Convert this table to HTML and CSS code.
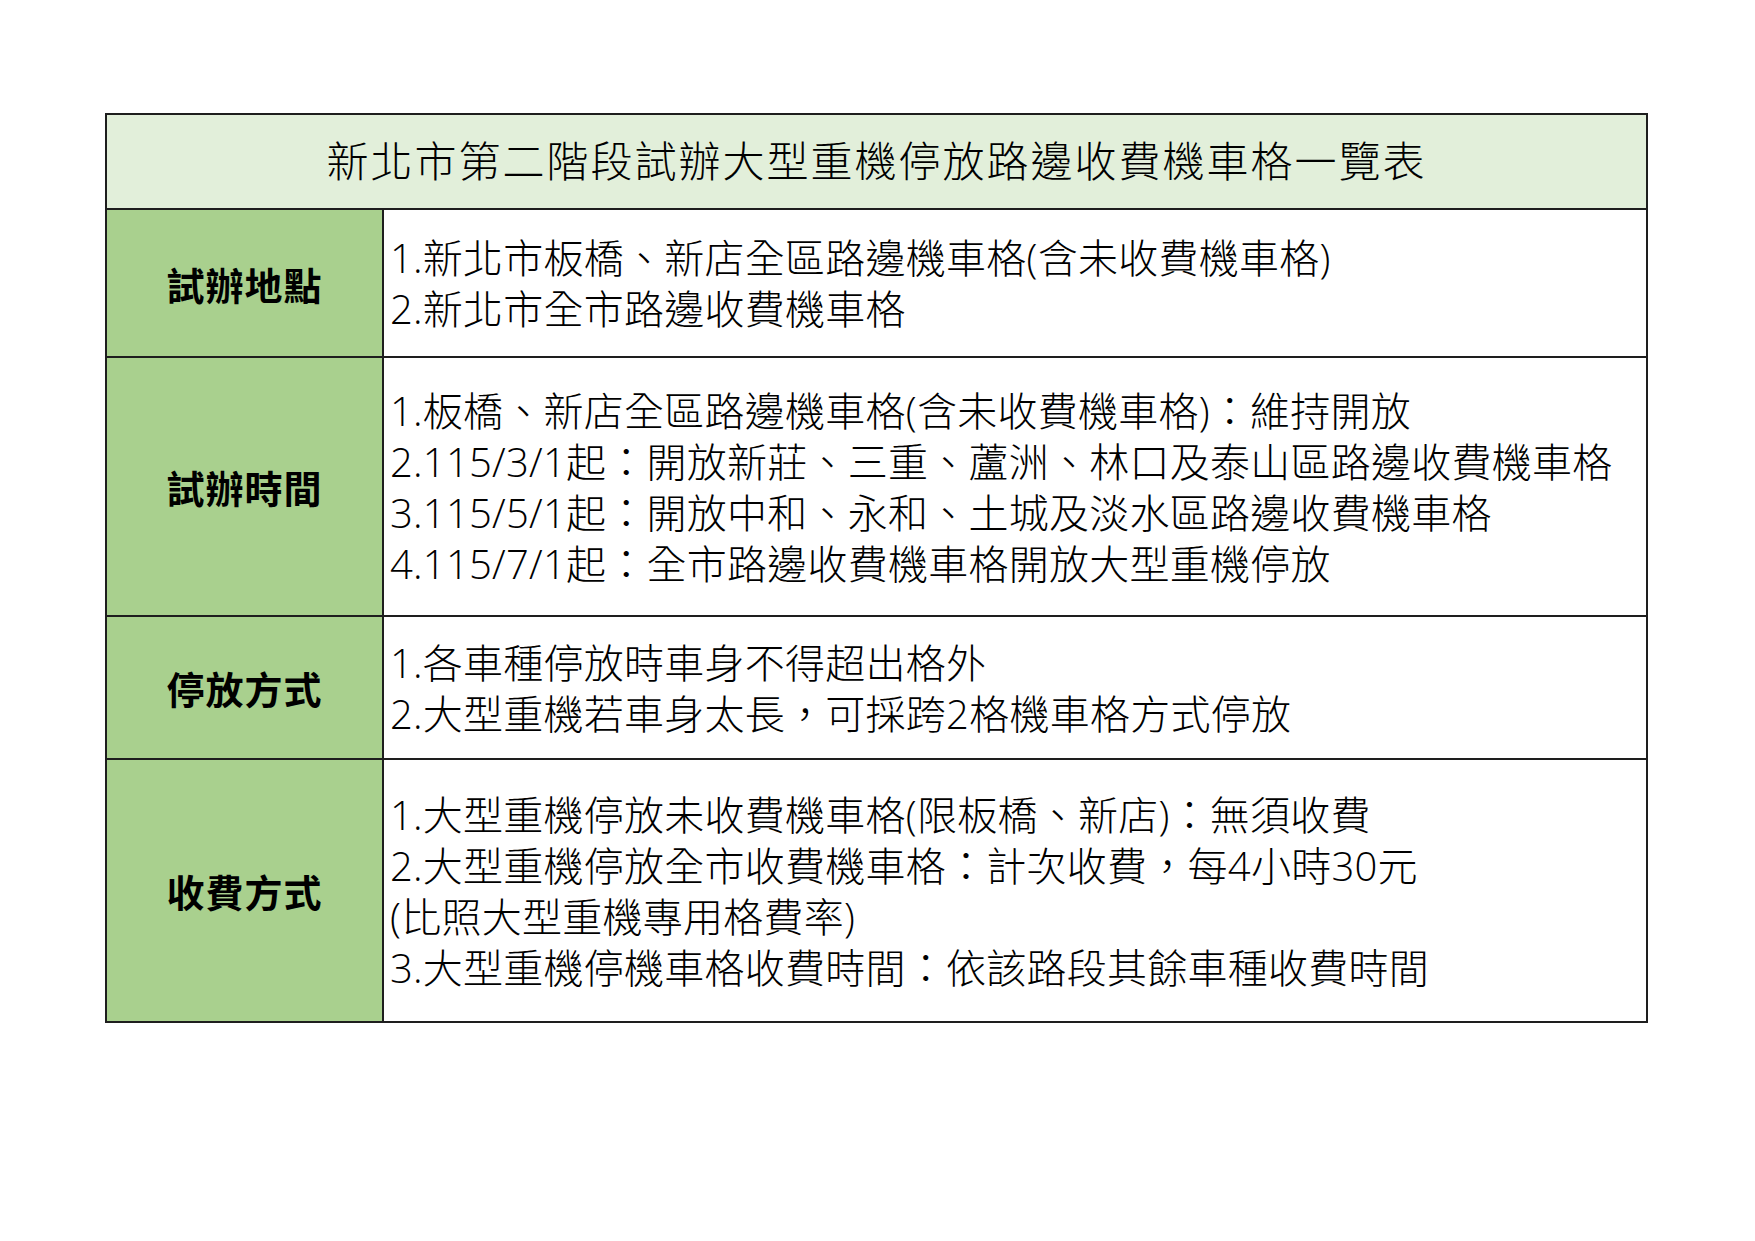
FILE: index.html
```html
<!DOCTYPE html>
<html lang="zh-Hant">
<head>
<meta charset="utf-8">
<title>新北市第二階段試辦大型重機停放路邊收費機車格一覽表</title>
<link rel="stylesheet" href="styles.css">
</head>
<body>
<div class="page">
  <div class="sheet">
    <div class="title">新北市第二階段試辦大型重機停放路邊收費機車格一覽表</div>
    <div class="row r1">
      <div class="label">試辦地點</div>
      <div class="content">
        <div class="line">1.新北市板橋、新店全區路邊機車格(含未收費機車格)</div>
        <div class="line">2.新北市全市路邊收費機車格</div>
      </div>
    </div>
    <div class="row r2">
      <div class="label">試辦時間</div>
      <div class="content">
        <div class="line">1.板橋、新店全區路邊機車格(含未收費機車格)：維持開放</div>
        <div class="line">2.115/3/1起：開放新莊、三重、蘆洲、林口及泰山區路邊收費機車格</div>
        <div class="line">3.115/5/1起：開放中和、永和、土城及淡水區路邊收費機車格</div>
        <div class="line">4.115/7/1起：全市路邊收費機車格開放大型重機停放</div>
      </div>
    </div>
    <div class="row r3">
      <div class="label">停放方式</div>
      <div class="content">
        <div class="line">1.各車種停放時車身不得超出格外</div>
        <div class="line">2.大型重機若車身太長，可採跨2格機車格方式停放</div>
      </div>
    </div>
    <div class="row r4">
      <div class="label">收費方式</div>
      <div class="content">
        <div class="line">1.大型重機停放未收費機車格(限板橋、新店)：無須收費</div>
        <div class="line">2.大型重機停放全市收費機車格：計次收費，每4小時30元</div>
        <div class="line">(比照大型重機專用格費率)</div>
        <div class="line">3.大型重機停機車格收費時間：依該路段其餘車種收費時間</div>
      </div>
    </div>
  </div>
</div>
</body>
</html>
```
FILE: styles.css
```css
html, body {
  margin: 0;
  padding: 0;
  background: #ffffff;
}

body {
  font-family: "Open Sans", "Noto Sans CJK TC", sans-serif;
  color: #000000;
}

.page {
  padding: 113px 0 0 105px;
}

.sheet {
  width: 1543px;
  box-sizing: border-box;
  border: 2px solid #1e1e1e;
}

.title {
  height: 95px;
  box-sizing: border-box;
  padding-bottom: 6px;
  background: #e2efda;
  border-bottom: 2px solid #1e1e1e;
  display: flex;
  align-items: center;
  justify-content: center;
  font-family: "Noto Sans CJK TC", sans-serif;
  font-size: 42px;
  font-weight: 300;
  letter-spacing: 2px;
}

.row {
  display: flex;
  border-bottom: 2px solid #1e1e1e;
}

.row:last-child {
  border-bottom: none;
}

.r1 { height: 146px; }
.r2 { height: 257px; }
.r3 { height: 141px; }
.r4 { height: 261px; }

.label {
  width: 275px;
  flex: none;
  background: #a9d08e;
  border-right: 2px solid #1e1e1e;
  display: flex;
  align-items: center;
  justify-content: center;
  font-family: "Noto Sans CJK TC", sans-serif;
  font-weight: 700;
  font-size: 38px;
  letter-spacing: 1px;
}

.content {
  flex: 1;
  display: flex;
  flex-direction: column;
  justify-content: center;
  padding-left: 6px;
  font-size: 40px;
  font-weight: 300;
  letter-spacing: 0.25px;
  line-height: 51px;
  white-space: nowrap;
}
```
